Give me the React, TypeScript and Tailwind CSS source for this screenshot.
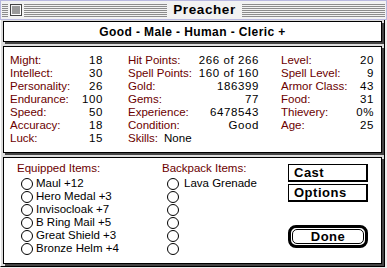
const sans = "font-['Liberation_Sans',Arial,sans-serif]";

const colA: [string, string][] = [
  ["Might:", "18"],
  ["Intellect:", "30"],
  ["Personality:", "26"],
  ["Endurance:", "100"],
  ["Speed:", "50"],
  ["Accuracy:", "18"],
  ["Luck:", "15"],
];

const colB: [string, string][] = [
  ["Hit Points:", "266 of 266"],
  ["Spell Points:", "160 of 160"],
  ["Gold:", "186399"],
  ["Gems:", "77"],
  ["Experience:", "6478543"],
  ["Condition:", "Good"],
];

const colC: [string, string][] = [
  ["Level:", "20"],
  ["Spell Level:", "9"],
  ["Armor Class:", "43"],
  ["Food:", "31"],
  ["Thievery:", "0%"],
  ["Age:", "25"],
];

const equipped = ["Maul +12", "Hero Medal +3", "Invisocloak +7", "B Ring Mail +5", "Great Shield +3", "Bronze Helm +4"];
const backpack = ["Lava Grenade", "", "", "", "", ""];

const StatColumn = ({ rows, width, labelClass }: { rows: [string, string][]; width: string; labelClass: string }) => (
  <div className={`flex flex-col ${width}`}>
    {rows.map(([label, value]) => (
      <div key={label} className="flex h-[13px] items-center justify-between leading-[13px]">
        <span className={labelClass}>{label}</span>
        <span className="tracking-[0.6px] text-black">{value}</span>
      </div>
    ))}
  </div>
);

const Radio = () => <span className="h-[12px] w-[12px] shrink-0 rounded-full border border-black bg-white" />;

const Panel = ({ className = "", children }: { className?: string; children: React.ReactNode }) => (
  <div className={`border border-black bg-white shadow-[2px_2px_0_#444] ${className}`}>{children}</div>
);

const Stripes = ({ className = "" }: { className?: string }) => (
  <div
    className={`h-[13px] bg-[repeating-linear-gradient(to_bottom,#8c8c8c_0px,#8c8c8c_1px,#f2f2f2_1px,#f2f2f2_2px)] ${className}`}
  />
);

export default function App() {
  const label = "text-[#6b0000]";
  return (
    <div className={`h-[268px] w-[387px] overflow-hidden bg-[#eeeeee] text-[11.5px] text-black ${sans}`}>
      {/* title bar */}
      <div className="flex h-[20px] items-center border border-[#b8b8e0] bg-[#f2f2f2] px-[1px]">
        <Stripes className="w-[6px]" />
        <div className="mx-[2px] flex h-[12px] w-[12px] items-center justify-center border border-[#444] bg-[#f2f2f2]">
          <div className="h-[9px] w-[9px] border-r border-b border-white bg-[#9a9a9a]" />
        </div>
        <Stripes className="flex-1" />
        <div className="px-[6px] text-[13.5px] font-bold leading-[18px] tracking-[0.6px]">Preacher</div>
        <Stripes className="flex-1" />
      </div>

      {/* body */}
      <div className="flex h-[247px] w-[385px] flex-col gap-[4px] border-r border-b border-l border-black border-l-white bg-[#dddddd] pt-[1px] pl-[2px]">
        <Panel className="flex h-[21px] w-[379px] items-center justify-center">
          <span className="text-[12px] font-bold tracking-[0.4px]">Good - Male - Human - Cleric +</span>
        </Panel>

        <Panel className="flex h-[107px] w-[379px] pt-[7px] pl-[6px]">
          <StatColumn rows={colA} width="w-[93px]" labelClass={label} />
          <div className="ml-[25px] flex w-[131px] flex-col">
            <StatColumn rows={colB} width="w-[131px]" labelClass={label} />
            <div className="flex h-[13px] items-center gap-[6px] leading-[13px]">
              <span className={label}>Skills:</span>
              <span>None</span>
            </div>
          </div>
          <div className="ml-[22px]">
            <StatColumn rows={colC} width="w-[93px]" labelClass={label} />
          </div>
        </Panel>

        <Panel className="flex h-[107px] w-[379px] pt-[4px]">
          <div className="flex w-[155px] flex-col pl-[13px]">
            <div className={`h-[13px] leading-[13px] ${label}`}>Equipped Items:</div>
            <div className="mt-[2px] flex flex-col pl-[4px]">
              {equipped.map((item) => (
                <div key={item} className="flex h-[13px] items-center gap-[3px] leading-[13px]">
                  <Radio />
                  <span>{item}</span>
                </div>
              ))}
            </div>
          </div>
          <div className="flex w-[123px] flex-col pl-[3px]">
            <div className={`h-[13px] leading-[13px] ${label}`}>Backpack Items:</div>
            <div className="mt-[2px] flex flex-col pl-[5px]">
              {backpack.map((item, i) => (
                <div key={i} className="flex h-[13px] items-center gap-[5px] leading-[13px]">
                  <Radio />
                  <span>{item}</span>
                </div>
              ))}
            </div>
          </div>
          <div className="flex flex-col pt-[2px] pl-[6px]">
            <button className="mb-[2px] flex h-[18px] w-[80px] items-center border border-black border-r-2 border-b-2 bg-white pl-[5px] text-[13px] font-bold tracking-[0.5px]">
              Cast
            </button>
            <button className="flex h-[18px] w-[80px] items-center border border-black border-r-2 border-b-2 bg-white pl-[5px] text-[13px] font-bold tracking-[0.5px]">
              Options
            </button>
            <div className="mt-[23px] flex h-[23px] w-[80px] rounded-[8px] border-[3px] border-black bg-white p-[1px]">
              <div className="flex flex-1 items-center justify-center rounded-[5px] border border-black text-[13px] font-bold tracking-[0.5px]">
                Done
              </div>
            </div>
          </div>
        </Panel>
      </div>
    </div>
  );
}
